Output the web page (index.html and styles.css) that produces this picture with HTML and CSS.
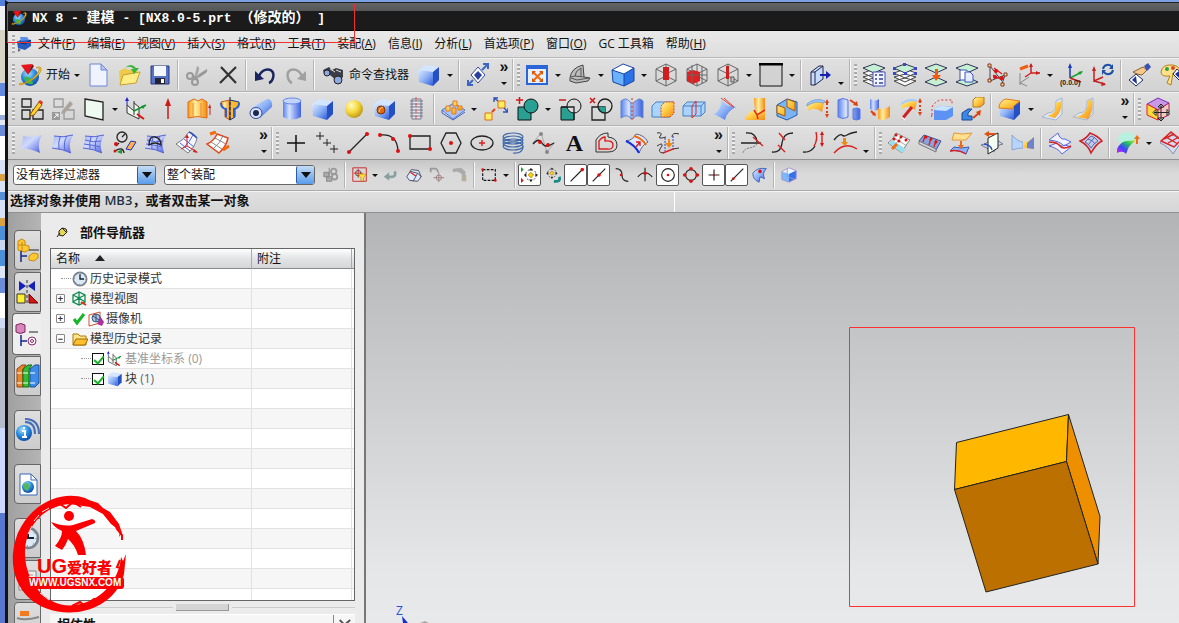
FILE: index.html
```html
<!DOCTYPE html>
<html lang="zh-CN">
<head>
<meta charset="utf-8">
<title>NX 8 - 建模</title>
<link rel="stylesheet" href="styles.css">
</head>
<body>
<svg class="defs" aria-hidden="true">
<defs>
<linearGradient id="blue" x1="0" y1="0" x2="1" y2="1"><stop offset="0" stop-color="#dce9ff"/><stop offset=".5" stop-color="#8db2f6"/><stop offset="1" stop-color="#2c58d6"/></linearGradient>
<linearGradient id="violet" x1="0" y1="0" x2="1" y2="1"><stop offset="0" stop-color="#a4b4f0"/><stop offset=".4" stop-color="#d0daff"/><stop offset="1" stop-color="#4658dc"/></linearGradient>
<linearGradient id="cyl" x1="0" x2="1" y1="0" y2="0"><stop offset="0" stop-color="#5a82ee"/><stop offset=".35" stop-color="#d5e2ff"/><stop offset="1" stop-color="#3d62e0"/></linearGradient>
<linearGradient id="gold" x1="0" y1="0" x2="1" y2="1"><stop offset="0" stop-color="#fff3a6"/><stop offset=".5" stop-color="#ffc840"/><stop offset="1" stop-color="#f08a20"/></linearGradient>
<linearGradient id="goldh" x1="0" x2="1" y1="0" y2="0"><stop offset="0" stop-color="#ff9a1e"/><stop offset=".4" stop-color="#fff0a0"/><stop offset="1" stop-color="#f58a10"/></linearGradient>
<radialGradient id="ball" cx=".35" cy=".3" r=".8"><stop offset="0" stop-color="#fffcc0"/><stop offset=".5" stop-color="#f4d63a"/><stop offset="1" stop-color="#b08a10"/></radialGradient>
<radialGradient id="globe" cx=".4" cy=".3" r=".8"><stop offset="0" stop-color="#a5e4ff"/><stop offset=".5" stop-color="#2588de"/><stop offset="1" stop-color="#0a3a9a"/></radialGradient>
<linearGradient id="rain" x1="0" y1="1" x2="1" y2="0"><stop offset="0" stop-color="#f020e0"/><stop offset=".35" stop-color="#4040ff"/><stop offset=".65" stop-color="#20c060"/><stop offset="1" stop-color="#f0f030"/></linearGradient>
<symbol id="cube" viewBox="0 0 24 24"><path d="M1 7 8 2 22 4 16 9Z" fill="#d3e5ff"/><path d="M1 7 16 9V23L2 19Z" fill="url(#blue)"/><path d="M16 9 22 4V17L16 23Z" fill="#2450c4"/></symbol>
<symbol id="nx" viewBox="0 0 24 24"><circle cx="12" cy="14" r="9" fill="url(#globe)"/><path d="M6 15q3-3 6 0t3 6q-7 1-9-6Z" fill="#3cb84a"/><path d="M2 20C7 22 20 13 21 7c1-3-2-2-3-2 7-4 7 4-1 10S-2 24 2 20Z" fill="#f6c021" stroke="#b07d08" stroke-width=".6"/><path d="M3 2 14 1 10 12Z" fill="#e8141c"/><path d="M14 1 16 3 10 12Z" fill="#8e0a10"/></symbol>
<symbol id="sheet" viewBox="0 0 24 24"><path d="M3 5q9 2 19-1Q17 12 20 22 12 18 1 17 3 11 3 5Z" fill="url(#violet)"/></symbol>
<symbol id="wire" viewBox="0 0 24 24"><path d="M12 1 22 6V18L12 23 2 18V6ZM2 6 12 11 22 6M12 11V23M12 1V13M2 18 12 13 22 18" fill="none" stroke="#666"/></symbol>
<symbol id="layers" viewBox="0 0 24 24"><path d="m12 15 11 3-11 5-11-5ZM12 11l11 3-11 5-11-5ZM12 6l11 4-11 5L1 10Z" fill="#f8f8f8" stroke="#444"/><path d="m12 1 11 4-11 5L1 5Z" fill="#c4f0d4" stroke="#335"/></symbol>
<symbol id="csys" viewBox="0 0 24 24"><path d="M9 4v14M9 14 2 8v8l12 6V10L9 6" fill="#eef5ee" stroke="#333"/><path d="M9 14 21 8" stroke="#14962e" stroke-width="1.5"/><path d="m21 8-5 1 2 3Z" fill="#14962e"/><path d="M2 2V8" stroke="#22c"/><path d="M2 0 0 4h4Z" fill="#22c"/><path d="m12 17 7 5" stroke="#d11" stroke-width="2"/></symbol>
<symbol id="snap" viewBox="0 0 20 20"><circle cx="11" cy="10" r="6" fill="none" stroke="#333" stroke-dasharray="2 2"/><path d="M11 2 13 5H9ZM11 18 13 15H9ZM3 10 6 8V12ZM19 10 16 8V12Z" fill="#222"/><path d="m11 7 3 3-3 3-3-3Z" fill="#ffcf20" stroke="#b08a00"/></symbol>
<symbol id="clock" viewBox="0 0 24 24"><circle cx="12" cy="12" r="10" fill="#dceaf6" stroke="#78828c" stroke-width="2.5"/><path d="M12 5v7h6" fill="none" stroke="#123" stroke-width="2"/><circle cx="12" cy="12" r="8" fill="none" stroke="#456" stroke-dasharray="1 5.28"/></symbol>
</defs>
</svg>

<div class="desktop">
<aside class="behind" aria-hidden="true"></aside>
<div class="window">
<header class="titlebar">
<svg class="i16"><use href="#nx"/></svg>
<h1><span>NX 8 - </span>建模<span> - [NX8.0-5.prt </span>（修改的）<span> ]</span></h1>
</header>

<nav class="menubar" aria-label="主菜单">
<svg class="i16" viewBox="0 0 16 16"><path d="M1 6 6 3 15 4V10L9 14 2 12Z" fill="#245cc0"/><path d="M4 1h7l2 3-8 1Z" fill="#5a90ea"/><path d="M1 6 9 8 15 4" fill="none" stroke="#0c2c70"/><path d="M2 12v4l3-2" fill="#667"/></svg>
<a href="#">文件(<u>F</u>)</a><a href="#">编辑(<u>E</u>)</a><a href="#">视图(<u>V</u>)</a><a href="#">插入(<u>S</u>)</a><a href="#">格式(<u>R</u>)</a><a href="#">工具(<u>T</u>)</a><a href="#">装配(<u>A</u>)</a><a href="#">信息(<u>I</u>)</a><a href="#">分析(<u>L</u>)</a><a href="#">首选项(<u>P</u>)</a><a href="#">窗口(<u>O</u>)</a><a href="#">GC 工具箱</a><a href="#">帮助(<u>H</u>)</a>
</nav>

<div class="toolbar">
<div class="group">
<button class="b label"><svg><use href="#nx"/></svg>开始<i class="tri"></i></button>
<button class="b" aria-label="新建"><svg viewBox="0 0 24 24"><path d="M4 1h11l6 6v16H4Z" fill="#eef3ff" stroke="#6f86d8"/><path d="M15 1v6h6Z" fill="#b6c6f8" stroke="#6f86d8"/></svg></button>
<button class="b" aria-label="打开"><svg viewBox="0 0 24 24"><path d="M2 8 8 5l3 2 9-2v14L3 22Z" fill="#efc94a"/><path d="M6 12 23 9l-4 11L3 22Z" fill="#ffec85" stroke="#c8a032"/><path d="M8 5q6-6 11 0h3l-5 6-3-5h3q-4-4-9-1Z" fill="#3cb43c"/></svg></button>
<button class="b" aria-label="保存"><svg viewBox="0 0 24 24"><path d="M3 3h18v18H3Z" fill="#5673c8" stroke="#27377a"/><path d="M6 3h12v10H6Z" fill="#f3f6ff"/><path d="M7 15h10v6H7Z" fill="#223"/><path d="M13 16h3v4h-3Z" fill="#fff"/></svg></button>
<span class="sep"></span>
<button class="b" aria-label="剪切"><svg viewBox="0 0 24 24"><path d="M9 15 12 3q3 1 2 4l-2 7Z" fill="#a8a8a8"/><path d="m11 15 3-4 8-5q1 2-1 4l-6 4Z" fill="#999"/><path d="m7 13 5 2-1 2" fill="none" stroke="#999" stroke-width="2"/><circle cx="5" cy="13" r="3" class="g2"/><circle cx="10" cy="19" r="3" class="g2"/></svg></button>
<button class="b" aria-label="删除"><svg viewBox="0 0 24 24"><path d="M5 4 20 20M20 4 4 20" stroke="#333" stroke-width="2.2"/></svg></button>
<span class="sep"></span>
<button class="b" aria-label="撤销"><svg viewBox="0 0 24 24"><path d="M6 13C9 4 23 4 20 15q-1 4-4 5" fill="none" stroke="#1a2560" stroke-width="2.5"/><path d="M2 8v10l9-2Z" fill="#1a2560"/></svg></button>
<button class="b" aria-label="重做"><svg viewBox="0 0 24 24"><path d="M18 13C15 4 1 4 4 15q1 4 4 5" fill="none" stroke="#a0a0a0" stroke-width="2.5"/><path d="M22 8v10l-9-2Z" fill="#a0a0a0"/></svg></button>
<span class="sep"></span>
<button class="b label tight"><svg viewBox="0 0 24 24"><path d="m2 7 6-3 3 3 4-2 7 2v7l-5 5-8-7-6-1Z" fill="#3b3d48"/><circle cx="6" cy="10" r="3" class="lens"/><circle cx="17" cy="17" r="4" class="lens"/><path d="m9 6 5 3M15 7l5 2" stroke="#ddd"/></svg>命令查找器</button>
<button class="b" aria-label="长方体"><svg><use href="#cube"/></svg></button><button class="drop" aria-label="更多体"></button>
<span class="sep"></span>
<button class="b" aria-label="自适应"><svg viewBox="0 0 24 24"><path d="m12 4 7 8-7 8-7-8Z" fill="#fff" stroke="#334ba0"/><path d="m12 8 4 4-4 5-4-5Z" fill="#2840a0"/><path d="m16 7 6-6m-5 0h5v5M7 17l-5 5m0-5v5h5" fill="none" stroke="#3b66c8" stroke-width="2"/></svg></button>
<button class="more m20" aria-label="更多按钮"><b>»</b><i class="tri"></i></button>
</div>
<div class="group">
<button class="b" aria-label="适合窗口"><svg viewBox="0 0 24 24"><path d="M1 2h22v20H1Z" fill="#2b66d8"/><path d="M3 6h18v14H3Z" fill="#e4f0ff"/><path d="m8 9 9 9M17 9l-9 9" stroke="#f06c10" stroke-width="2"/><path d="M7 8h4l-4 4ZM18 8h-4l4 4ZM7 19h4l-4-4ZM18 19h-4l4-4Z" fill="#d65708"/></svg></button><button class="drop" aria-label="适合选项"></button>
<button class="b" aria-label="渲染样式"><svg viewBox="0 0 24 24"><path d="M2 15Q3 5 15 2L16 14 22 15 20 18 8 20 2 18Z" fill="#bcbcbc" stroke="#444"/><path d="m3 14 4-1 9 1M7 13q0-5 6-8v9M3 15l6 2 12-2" fill="none" stroke="#555"/></svg></button><button class="drop" aria-label="样式选项"></button>
<button class="b" aria-label="正等测视图"><svg viewBox="0 0 24 24"><path d="M1 7 12 1l11 4-10 6Z" fill="#fff"/><path d="M1 7 13 11V23L2 19Z" fill="#6ab2ff"/><path d="M13 11 23 5v13l-10 5Z" fill="#2b72e6"/><path d="M1 7 12 1l11 4v13l-10 5L2 19ZM1 7l12 4 10-6M13 11v12" fill="none" stroke="#1546a8"/></svg></button><button class="drop" aria-label="视图选项"></button>
<button class="b" aria-label="剖切"><svg><use href="#wire"/><path d="M9 4h6v13H9Z" fill="#d01c1c"/></svg></button>
<button class="b" aria-label="编辑剖切"><svg><use href="#wire"/><path d="M2 9l6-2 7 2v9l-7 3-6-3Z" fill="#e02020"/><path d="M7 2V20M17 3V21M2 12H22" stroke="#666"/></svg></button>
<button class="b" aria-label="对象显示"><svg><use href="#wire"/><path d="M10 3h3v13h-3Z" fill="#d01c1c"/><path d="M15 14h3v5h-3Z" fill="#ccc" stroke="#555"/></svg></button><button class="drop" aria-label="显示选项"></button>
<button class="b" aria-label="背景"><svg viewBox="0 0 24 24"><path d="M1 1h22v22H1Z" fill="#d2d2d2" stroke="#111"/><path d="M0 1h24" stroke="#000" stroke-width="3"/></svg></button><button class="drop" aria-label="背景选项"></button>
<span class="sep"></span>
<button class="b" aria-label="移动面"><svg viewBox="0 0 24 24"><path d="m3 9 8-6h4v13l-8 6H3Z" fill="#c6dcff" stroke="#224"/><path d="M7 9v13M7 9l8-6M3 9h4" fill="none" stroke="#224"/><path d="M12 12h7" stroke="#1522b0" stroke-width="2"/><path d="m18 8 5 4-5 4Z" fill="#1522b0"/></svg></button>
<button class="more m14" aria-label="更多按钮"><b></b><i class="tri"></i></button>
</div>
<div class="group">
<button class="b" aria-label="图层设置"><svg><use href="#layers"/><path d="M11 9h12v14H11Z" fill="#f2f4ff" stroke="#4450c0"/><path d="M13 12h2m2 0h4M13 16h2m2 0h4M13 20h2m2 0h4" stroke="#3340a0" stroke-width="1.5"/></svg></button>
<button class="b" aria-label="图层视图"><svg><use href="#layers"/><path d="M0 4h3v3H0ZM21 4h3v3h-3ZM0 9h3v3H0ZM21 9h3v3h-3ZM10 0h3v3h-3ZM11 9h3v3h-3Z" fill="#3848c8"/></svg></button>
<button class="b" aria-label="移动至图层"><svg viewBox="0 0 24 24"><path d="m12 1 11 4-11 5L1 5ZM12 14l11 5-11 4-11-4Z" fill="#c4f0d4" stroke="#335"/><path d="M11 6h3v6h3l-5 6-4-6h3Z" fill="#f05a10"/></svg></button>
<button class="b" aria-label="复制至图层"><svg viewBox="0 0 24 24"><path d="m12 1 11 4-11 5L1 5ZM12 14l11 5-11 4-11-4Z" fill="#c4f0d4" stroke="#335"/><path d="M5 7h6l3 2v8H5Z" fill="#fff" stroke="#3c54b8"/><path d="M10 9h5l3 3v7h-8Z" fill="#e6ecff" stroke="#3c54b8"/></svg></button>
<button class="b" aria-label="基准点"><svg viewBox="0 0 24 24"><path d="M4 3v15l15-6-3 9M4 3l12 15" fill="none" stroke="#444"/><path d="m7 12 9 5M8 5l8 6" class="rl"/><circle cx="10" cy="8" r="2" class="rd"/><circle cx="9" cy="14" r="2" class="rd"/><circle cx="16" cy="15" r="2" class="rd"/><path d="M2 1h3v3H2ZM2 16h3v3H2ZM18 10h3v3h-3ZM15 20h3v3h-3Z" fill="#ffe070" stroke="#803030"/></svg></button>
<button class="b" aria-label="定向坐标系"><svg viewBox="0 0 24 24"><path d="M3 10v12M3 20l9-6M3 20l7 3" fill="none" stroke="#888"/><path d="M14 1v9h9M14 10l-6 4" fill="none" stroke="#d02020" stroke-width="1.5"/><path d="M3 6 11 3" stroke="#ee5d10" stroke-width="3"/><path d="m23 10-4-2v4ZM14 0l-2 4h4Z" fill="#d02020"/></svg></button><button class="drop" aria-label="坐标系选项"></button>
<button class="b" aria-label="坐标原点"><svg viewBox="0 0 24 24"><path d="M10 3v12" stroke="#1838c0" stroke-width="1.5"/><path d="m10 0-2 5h4Z" fill="#1838c0"/><path d="m10 15 12-6" stroke="#18a030" stroke-width="1.5"/><path d="m23 8-5 1 2 3Z" fill="#18a030"/><path d="m10 15 11 4" stroke="#c01818" stroke-width="1.5"/><text x="0" y="22" class="tiny">(0.0.0)</text></svg></button>
<button class="b" aria-label="旋转坐标系"><svg viewBox="0 0 24 24"><path d="M3 5v13l9-4M3 18l11 3" fill="none" stroke="#c82020" stroke-width="1.5"/><path d="M3 3 1 8h4ZM15 22l-4-3-1 4Z" fill="#c82020"/><path d="M12 6a5 5 0 0 1 9-2M22 7a5 5 0 0 1-9 2" fill="none" stroke="#1b4ea8" stroke-width="2"/><path d="M22 1v5h-4ZM11 12V7h4Z" fill="#1b4ea8"/></svg></button>
<span class="sep"></span>
<button class="b" aria-label="隐藏"><svg viewBox="0 0 24 24"><path d="m5 9 10-5 4 3-5 5-5-1Z" fill="#f6c88a" stroke="#8a6030"/><path d="m16 3 4-3 3 4-4 4Z" fill="#3c50b0"/><path d="m8 11 7 6-7 6-7-6Z" fill="#fff" stroke="#1a2860"/><path d="m8 13 1 8-5-4Z" fill="#1c349a"/></svg></button>
<button class="b" aria-label="编辑显示"><svg viewBox="0 0 24 24"><path d="M2 9Q3 1 14 2q9 2 7 9l-7-1-2 12-4-2 3-7q-9 1-9-4Z" fill="#ffe08c" stroke="#b48210"/><circle cx="8" cy="6" r="2" fill="#30a040"/><circle cx="14" cy="5" r="2" fill="#e04030"/><path d="m18 6 7 6-5 5-6-6Z" fill="#fff" stroke="#1a2860"/><path d="m20 8v7l-4-4Z" fill="#1c349a"/></svg></button>
</div>
</div>

<div class="toolbar">
<div class="group">
<button class="b" aria-label="草图"><svg viewBox="0 0 24 24"><path d="M2 2h9v8H2ZM2 13h8v9H2ZM13 13h10v9H13Z" class="k"/><path d="m11 16 8-11 3 3-8 10-4 1Z" fill="#ffd030" stroke="#865300"/><path d="m18 5 2-2 3 2-1 3Z" fill="#d84020"/></svg></button>
<button class="b" aria-label="任务环境草图"><svg viewBox="0 0 24 24"><path d="M3 2h9v8H3ZM13 13h10v9H13Z" fill="none" stroke="#999" stroke-width="1.3"/><path d="m11 14 8-10 3 3-8 9-4 1Z" fill="#aaa49a"/><path d="M1 15h8v8H1Z" fill="#999"/><path d="m3 21 4-4m0 3v-3H4" stroke="#fff" fill="none"/></svg></button>
<button class="b" aria-label="基准平面"><svg viewBox="0 0 24 24"><path d="m3 2 18 3v18L3 19Z" fill="#eefaf0" stroke="#222" stroke-width="1.3"/></svg></button><button class="drop" aria-label="基准选项"></button>
<button class="b" aria-label="基准坐标系"><svg><use href="#csys"/></svg></button>
<button class="b" aria-label="矢量"><svg viewBox="0 0 24 24"><path d="M12 22V5" stroke="#d01818" stroke-width="1.5"/><path d="m12 1-3 8h6Z" fill="#d01818"/></svg></button>
<button class="b" aria-label="拉伸"><svg viewBox="0 0 24 24"><path d="M1 5 7 2l4 2 4-2 5 3v16q-9-3-19 0Z" fill="url(#goldh)" stroke="#e06a10"/><path d="M6 6v14M14 6v14" stroke="#e89030"/><path d="M23 18v-8" stroke="#d02020"/><path d="m23 7-2 4h3Z" fill="#d02020"/></svg></button>
<button class="b" aria-label="回转"><svg viewBox="0 0 24 24"><path d="M3 5 12 3v20l-5-3v-8q-4-1-4-7Z" fill="url(#goldh)" stroke="#c05a10"/><path d="m12 3 9 2q0 6-4 7v8l-5 3Z" fill="#ffb830" stroke="#123884"/><path d="M3 6q0 5 5 6v8M21 6q0 5-5 6v8" fill="none" stroke="#2c60d0" stroke-width="2"/><path d="M12 0v24" stroke="#222" stroke-dasharray="3 2"/></svg></button>
<button class="b" aria-label="管道"><svg viewBox="0 0 24 24"><path d="m2 11 16-9q6 0 5 8L11 21Z" fill="url(#blue)"/><ellipse cx="7" cy="16" rx="6" ry="5.500" fill="#dbe4ff" stroke="#354a90"/><ellipse cx="7" cy="16" rx="3" ry="3" fill="#1c2850"/></svg></button>
<button class="b" aria-label="圆柱"><svg viewBox="0 0 24 24"><path d="M3 4v16q9 5 18 0V4Z" fill="url(#cyl)"/><ellipse cx="12" cy="4" rx="9" ry="3" fill="#c2d5ff" stroke="#6688e8"/></svg></button>
<button class="b" aria-label="块"><svg><use href="#cube"/></svg></button>
<button class="b" aria-label="球"><svg viewBox="0 0 24 24"><circle cx="12" cy="12" r="9" fill="url(#ball)"/></svg></button>
<button class="b" aria-label="孔"><svg><use href="#cube"/><circle cx="8" cy="13" r="4" fill="#e06a10" stroke="#803000"/><path d="M6 15q0-4 4-5" stroke="#ffd080" fill="none"/></svg></button>
<button class="b" aria-label="螺纹"><svg viewBox="0 0 24 24"><path d="M8 2h9v20H8Z" fill="#e4e8f0" stroke="#778"/><path d="M6 4h13M6 7h13M6 10h13M6 13h13M6 16h13M6 19h13" stroke="#778"/><path d="M12 0v24" stroke="#e05050" stroke-dasharray="4 2"/></svg></button>
<span class="sep"></span>
<button class="b" aria-label="阵列特征"><svg viewBox="0 0 24 24"><path d="M1 13 13 6l11 7-12 9Z" fill="#a8c4ff" stroke="#5878c8"/><path d="M1 13v3l11 7 12-8" fill="none" stroke="#3c60c0"/><path d="M5 9h4v5H5ZM12 4h4v5h-4ZM17 9h4v4h-4ZM11 11h4v6h-4Z" fill="url(#gold)" stroke="#e07a18"/></svg></button><button class="drop" aria-label="阵列选项"></button>
<button class="b" aria-label="镜像"><svg viewBox="0 0 24 24"><path d="M1 16h7v7H1ZM14 4h7v7h-7Z" fill="#fff060" stroke="#e06a10"/><path d="m8 15 3-3" stroke="#e04010" stroke-width="2"/><path d="M14 1h-4v4M10 1l4 3M19 15h5v-4M24 15l-4-4" class="bl"/></svg></button>
<button class="b" aria-label="求和"><svg viewBox="0 0 24 24"><path d="M3 10h13v13H3Z" fill="#28a094" stroke="#111"/><circle cx="16" cy="9" r="7" fill="#28a094" stroke="#111"/><path d="M1 3h7M4.500 0v7" stroke="#d01818" stroke-width="1.5"/></svg></button><button class="drop" aria-label="布尔选项"></button>
<button class="b" aria-label="求差"><svg viewBox="0 0 24 24"><path d="M3 10h13v13H3Z" fill="#28a094" stroke="#111"/><circle cx="16" cy="9" r="7" fill="#dadada" stroke="#111"/><path d="M3 10h13v13" class="k"/><path d="M1 3h7" stroke="#d01818" stroke-width="1.500"/></svg></button>
<button class="b" aria-label="求交"><svg viewBox="0 0 24 24"><path d="M3 10h13v13H3Z" class="k"/><path d="M9 10h7v6q-7 0-7-6Z" fill="#28a094"/><circle cx="16" cy="9" r="7" class="k"/><path d="m1 1 5 5M6 1 1 6" stroke="#d01818" stroke-width="1.500"/></svg></button>
<button class="b" aria-label="缝合"><svg viewBox="0 0 24 24"><path d="M1 4q5-4 8 0 2 1 2 3v15q-3-6-10-1ZM13 7q1-3 3-3 3-4 7 0v17q-7-5-10 1Z" fill="url(#cyl)" stroke="#5c84d0"/><path d="M12 1v22" stroke="#e03030" stroke-dasharray="2 2"/></svg></button>
<button class="b" aria-label="修剪体"><svg viewBox="0 0 24 24"><path d="m1 9 4-4h18l-4 4v11H1Z" fill="#a8d4ff" stroke="#4880c0"/><path d="m10 9 4-4h9v11l-4 4h-9Z" fill="url(#gold)" stroke="#e04820" stroke-dasharray="2 1"/></svg></button>
<button class="b" aria-label="拆分体"><svg viewBox="0 0 24 24"><path d="m1 9 4-4h18v10l-4 4H1Z" fill="#a8d4ff" stroke="#4880c0"/><path d="M1 9h18l4-4M19 9v10" fill="none" stroke="#4880c0"/><path d="m10 9 4-5v13l-4 4Z" fill="none" stroke="#d03030"/></svg></button>
<button class="b" aria-label="修剪片体"><svg viewBox="0 0 24 24"><path d="M8 2q4 7 15 8-9 4-11 13L1 17q8-4 7-15Z" fill="url(#blue)"/><path d="m8 1 12 9M11 1l10 9" fill="none" stroke="#e04040"/></svg></button>
<button class="b" aria-label="延伸片体"><svg viewBox="0 0 24 24"><path d="M10 1h11v19q-6 4-8-1Q10 11 10 1Z" fill="url(#goldh)"/><path d="m10 13 3 5 8-5v10H1q2-8 9-10Z" fill="url(#gold)"/><path d="m10 13 3 5 8-5M13 18l1 4" fill="none" stroke="#e03010" stroke-width="1.500"/></svg></button>
<button class="b" aria-label="补片"><svg viewBox="0 0 24 24"><path d="m2 8 10-6 10 3v13l-10 5-10-4Z" fill="#7ab4f4" stroke="#2858a8"/><path d="m2 8 8 3v8l-8-3ZM12 2v8l8 4V5Z" fill="url(#gold)" stroke="#a05808"/></svg></button>
<button class="b" aria-label="加厚"><svg viewBox="0 0 24 24"><path d="M1 9Q9 3 18 6l-2 9Q8 9 3 14Z" fill="url(#gold)"/><path d="M1 9Q9 3 18 6l1-2Q9 0 1 7Z" fill="#a0ccff" stroke="#4070b0" stroke-width=".5"/><path d="M21 6v12" stroke="#e04010" stroke-dasharray="2 2" stroke-width="2"/><path d="m21 2-2 4h4ZM21 21l-2-4h4Z" fill="#e04010"/></svg></button>
<button class="b" aria-label="移动体"><svg viewBox="0 0 24 24"><path d="M1 3q5-3 10 0v17q-5 3-10 0ZM16 12q4-2 7 0v10q-4 2-7 0Z" fill="url(#cyl)" stroke="#5878e8"/><path d="m13 3 6 4" stroke="#e04010" stroke-width="2"/><path d="m21 9-5-1 4-4Z" fill="#e04010"/></svg></button>
<button class="b" aria-label="替换面"><svg viewBox="0 0 24 24"><path d="M2 2q5 3 9 0v10q-4 3-9 0Z" fill="url(#cyl)"/><path d="M10 11q6 3 12-2v11q-6 5-12 2Z" fill="url(#goldh)"/><path d="m3 14 3 3" stroke="#e04010" stroke-width="2"/><path d="m8 19-4-1 3-3Z" fill="#e04010"/></svg></button>
<button class="b" aria-label="偏置面"><svg viewBox="0 0 24 24"><path d="M2 8Q11 2 18 5l-2 8Q8 7 3 12Z" fill="url(#gold)"/><path d="M2 8Q11 2 18 5V3Q10 0 2 6Z" fill="#a0ccff"/><path d="M3 22 13 10" stroke="#d02020" stroke-width="3"/><path d="m2 20 4 3" stroke="#eee" stroke-width="2"/><path d="M21 4v12" stroke="#e04010" stroke-dasharray="2 2" stroke-width="2"/><path d="m21 1-2 4h4ZM21 19l-2-4h4Z" fill="#e04010"/></svg></button>
<button class="b" aria-label="抽取"><svg viewBox="0 0 24 24"><path d="M4 13q4-5 9-4l10 1v9l-7 4H4Z" fill="#5c92f4"/><path d="M4 13q4-5 9-4l10 1-7 4Z" fill="#c8e4ff"/><path d="M2 18V10q4-7 10-7h10v5M2 18l-1 3" fill="none" stroke="#e03030" stroke-dasharray="2 2"/></svg></button>
<button class="b" aria-label="复制体"><svg viewBox="0 0 24 24"><path d="m1 16 6-4h4l-4 4v3h4v4H1Z" fill="#3c88e8" stroke="#184890"/><path d="m12 3 3-3h8v7l-4 3h-7Z" fill="url(#gold)" stroke="#b87818"/><path d="m12 21 6-5" stroke="#e04010" stroke-width="2"/><path d="m20 13-1 6-4-4Z" fill="#e04010"/></svg></button>
<span class="sep"></span>
<button class="b" aria-label="边倒圆"><svg><use href="#cube"/><path d="M1 9q2-6 7-7l14 2-5 4q-2 1-2 4L1 11Z" fill="url(#gold)" stroke="#e07a18"/></svg></button><button class="drop" aria-label="倒圆选项"></button>
<button class="b" aria-label="面倒圆"><svg viewBox="0 0 24 24"><path d="m15 4 6-3v16l-6 6L1 20l6-4q9 0 8-12Z" fill="#dce8fa" stroke="#a4b4d0"/><path d="m15 6 5-2q2 10-6 17L6 19q10-2 9-13Z" fill="url(#gold)"/></svg></button>
<button class="b" aria-label="软倒圆"><svg viewBox="0 0 24 24"><path d="m15 4 6-3v16l-6 6L1 20l6-4q9 0 8-12Z" fill="#dce8fa" stroke="#a4b4d0"/><path d="m16 4 4-2q2 12-4 20L3 20q13-2 13-16Z" fill="url(#gold)"/></svg></button>
<button class="more m36" aria-label="更多按钮"><b>»</b><i class="tri"></i></button>
</div>
<div class="group">
<button class="b" aria-label="移动面"><svg viewBox="0 0 24 24"><path d="m1 7 11-6 11 5-11 7Z" fill="#c898e8" stroke="#7830b0"/><path d="m1 7 11 6v10L1 18Z" fill="#ffd83a" stroke="#e02020"/><path d="m12 13 11-7v12l-11 5Z" fill="#f4c8c0" stroke="#b02060"/><path d="M15 8v15M8 15.500h15M15 7l-3 3h6ZM15 24l-3-3h6ZM7 15.500l3-3v6ZM24 15.500l-3-3v6Z" fill="#fff" stroke="#222"/></svg></button>
<button class="b" aria-label="拉出面"><svg viewBox="0 0 24 24"><path d="M4 4h18v17H4Z" fill="#ffd83a" stroke="#e02020"/></svg></button>
</div>
</div>

<div class="toolbar last">
<div class="group">
<button class="b" aria-label="四点曲面"><svg><use href="#sheet"/></svg></button>
<button class="b" aria-label="直纹"><svg><use href="#sheet"/><path d="M3 5q9 2 19-1M1 17q11 1 19 5M9 6q-2 6-1 12M16 5q-4 6-2 15" class="net"/></svg></button>
<button class="b" aria-label="网格曲面"><svg><use href="#sheet"/><path d="M3 5q9 2 19-1M1 17q11 1 19 5M3 9q9 3 16 1M2 13q9 1 16 3M9 6q-2 6-1 12M16 5q-4 6-2 15" class="net"/></svg></button>
<button class="b" aria-label="艺术曲面"><svg viewBox="0 0 24 24"><circle cx="9" cy="6" r="5" class="k"/><path d="m9 6 3-3M3 15l3-3M2 20q8-5 9 2" class="k"/><circle cx="3" cy="13" r="2" class="rd"/><circle cx="2" cy="20" r="1.500" class="rd"/><path d="m4 21 5-3v5Z" fill="#1b9c2b"/><path d="m13 18 5-8 5 1-5 8Z" fill="#ffb050" stroke="#2030b0"/></svg></button>
<button class="b" aria-label="N 边曲面"><svg><use href="#sheet"/><path d="M3 5q9 2 19-1M1 17q11 1 19 5M3 9q9 3 16 1M2 13q9 1 16 3M9 6q-2 6-1 12M16 5q-4 6-2 15" class="net"/><path d="M5 14q0-9 6-8t6 8q-6-4-12 0Z" class="k"/></svg></button>
<button class="b" aria-label="扫掠"><svg viewBox="0 0 24 24"><path d="M1 13Q8 10 14 1l8 6q-2 9-9 15Z" fill="#f4f7ff" stroke="#555" stroke-width=".7"/><path d="m5 12 10 8M9 8l10 8M8 17Q15 11 18 4" class="net"/><path d="M14 1q3 1 8 6" class="bl"/><path d="M12 15V6M12 15l-6 3M12 15l10 6" fill="none" stroke="#d42020"/><path d="m12 3-2 4h4ZM23 22l-4-4-1 3Z" fill="#d02020"/></svg></button>
<button class="b" aria-label="规律延伸"><svg viewBox="0 0 24 24"><path d="M1 13Q8 10 11 3l11 4q-2 9-9 15Z" fill="#fff" stroke="#e04820" stroke-width="1.500"/><path d="m5 11 11 7M9 7l11 6M8 17Q14 12 17 5" stroke="#888" fill="none"/><path d="m4 3 6-2M17 19l6-4" stroke="#f06b10" stroke-width="3"/></svg></button>
<button class="more m40" aria-label="更多按钮"><b>»</b><i class="tri"></i></button>
</div>
<div class="group">
<button class="b" aria-label="点"><svg viewBox="0 0 24 24"><path d="M12 4v17M3 12h18" stroke="#111" stroke-width="1.500"/></svg></button>
<button class="b" aria-label="点集"><svg viewBox="0 0 24 24"><path d="M5 1v8M1 5h8M12 8v7M8 12h8M19 14v8M15 18h8" stroke="#222"/></svg></button>
<button class="b" aria-label="直线"><svg viewBox="0 0 24 24"><path d="M3 21 21 3" class="k"/><circle cx="3" cy="21" r="2" class="rd"/><circle cx="21" cy="3" r="2" class="rd"/></svg></button>
<button class="b" aria-label="圆弧"><svg viewBox="0 0 24 24"><path d="M3 4Q20 2 21 20" class="k"/><circle cx="3" cy="4" r="2" class="rd"/><circle cx="16" cy="8" r="2" class="rd"/><circle cx="21" cy="20" r="2" class="rd"/></svg></button>
<button class="b" aria-label="矩形"><svg viewBox="0 0 24 24"><path d="M2 5h20v13H2Z" class="k"/><circle cx="2" cy="5" r="2" class="rd"/><circle cx="22" cy="18" r="2" class="rd"/></svg></button>
<button class="b" aria-label="多边形"><svg viewBox="0 0 24 24"><path d="M7 2h10l5 10-5 10H7L2 12Z" class="k"/><circle cx="12" cy="12" r="2" class="rd"/></svg></button>
<button class="b" aria-label="椭圆"><svg viewBox="0 0 24 24"><ellipse cx="12" cy="12" rx="11" ry="7" class="k"/><path d="M9 12h6M12 9v6" class="rl"/></svg></button>
<button class="b" aria-label="螺旋线"><svg viewBox="0 0 24 24"><g class="coil"><ellipse cx="12" cy="6" rx="10" ry="4"/><ellipse cx="12" cy="9" rx="10" ry="4"/><ellipse cx="12" cy="12" rx="10" ry="4"/><ellipse cx="12" cy="15" rx="10" ry="4"/><path d="M22 15q0 8-10 7"/></g></svg></button>
<button class="b" aria-label="样条"><svg viewBox="0 0 24 24"><path d="m1 12 8-10 6 19 8-10" fill="none" stroke="#aaa"/><path d="M1 13q6-7 9-1t12 0" class="k"/><circle cx="9" cy="3" r="2" fill="#888"/><circle cx="15" cy="21" r="2" fill="#888"/><circle cx="8" cy="11" r="2" class="rd"/><circle cx="16" cy="14" r="2" class="rd"/></svg></button>
<button class="b" aria-label="文本"><span class="letter">A</span></button>
<button class="b" aria-label="偏置曲线"><svg viewBox="0 0 24 24"><path d="M2 21V9q4-7 12-7v4q9 1 9 8t-9 7Z" fill="none" stroke="#333"/><path d="M5 18v-8q3-4 6-4v4q8-1 8 4t-6 4Z" class="rl"/></svg></button>
<button class="b" aria-label="在面上偏置"><svg viewBox="0 0 24 24"><path d="M1 10Q8 9 11 3q8 1 12 8-6 3-9 11-4-8-13-12Z" fill="#dce8ff" stroke="#667"/><path d="M1 10q9 4 13 12" fill="none" stroke="#1530e0" stroke-width="2"/><path d="M9 5q8 2 12 9" fill="none" stroke="#ee6a10" stroke-width="2"/><path d="m11 16 4-5m0 4v-4h-4" class="rl"/></svg></button>
<button class="b" aria-label="桥接曲线"><svg viewBox="0 0 24 24"><path d="M1 2q5-1 4 2-5 5 5 2M23 3q-7-2-7 3M1 15q6-4 5 0-6 7 2 7M17 18l6-1" fill="none" stroke="#333"/><path d="M9 7v13M17 5v14" stroke="#3040d0" stroke-dasharray="2 1"/><path d="M12 8h2v4h3l-4 5-4-5h3Z" fill="#ee8a10"/><path d="m7 22 10-4" class="rl"/></svg></button>
<button class="more m44" aria-label="更多按钮"><b>»</b><i class="tri"></i></button>
</div>
<div class="group">
<button class="b" aria-label="修剪曲线"><svg viewBox="0 0 24 24"><path d="M1 12h20M6 2q10-1 11 9" class="k"/><path d="M17 13q-2 3-8 4-5 1-6 5" fill="none" stroke="#777" stroke-dasharray="2 1"/><path d="m13 6 10 9" class="rl"/></svg></button>
<button class="b" aria-label="分割曲线"><svg viewBox="0 0 24 24"><path d="M1 21q9 1 10-9T22 2" class="k"/><path d="m8 2 6 7M7 14l7 7" class="rl"/></svg></button>
<button class="b" aria-label="曲线长度"><svg viewBox="0 0 24 24"><path d="M1 21q8 1 12-6" class="k"/><path d="M12 15q4-6 2-14M20 3v11" class="rl"/><path d="m20 0-2 4h4ZM20 16l-2-4h4Z" class="rd"/></svg></button>
<button class="b" aria-label="光顺曲线"><svg viewBox="0 0 24 24"><path d="M1 9q6-7 8-5t5 0 10-3" class="k"/><path d="M1 22q11-12 23-4" class="rl"/><path d="M10 7h3v4h2l-3 4-4-4h2Z" fill="#ee8a10"/></svg></button>
<button class="more m14" aria-label="更多按钮"><b></b><i class="tri"></i></button>
</div>
<div class="group">
<button class="b" aria-label="X 成形"><svg viewBox="0 0 24 24"><path d="M1 12Q7 8 9 2l14 7q-5 5-8 13Z" fill="#fafafa" stroke="#888"/><path d="m2 12 3-3 14 9-4 4Z" fill="#9adff0"/><path d="m7 7 13 8M15 5l-8 10" fill="none" stroke="#aaa"/><g class="rd"><circle cx="9" cy="4" r="1.500"/><circle cx="14" cy="6" r="1.500"/><circle cx="19" cy="9" r="1.500"/><circle cx="7" cy="8" r="1.500"/><circle cx="12" cy="10" r="1.500"/></g><path d="m5 18 5-5" stroke="#f07010" stroke-width="3"/></svg></button>
<button class="b" aria-label="I 成形"><svg viewBox="0 0 24 24"><path d="m1 10 5-6 17 6-5 9Z" fill="#88a4e0" stroke="#405090"/><path d="m1 10 17 8v3L1 13Z" fill="#d0d0dc" stroke="#777"/><path d="m7 5-2 6M13 7l-2 7M18 9l-2 7" class="rl"/><g class="rd"><circle cx="8" cy="6" r="1.500"/><circle cx="13" cy="8" r="1.500"/><circle cx="18" cy="11" r="1.500"/></g></svg></button>
<button class="b" aria-label="曲面变形"><svg viewBox="0 0 24 24"><path d="M5 2q8 2 18 0l-6 7H3Z" fill="#ffe090" stroke="#e09a30"/><path d="M1 20 5 16q7 2 15 0l-3 7q-7-5-16-3Z" fill="#8cb0f8" stroke="#3858b8"/><path d="M12 10v5" fill="none" stroke="#ee6810" stroke-width="2"/><path d="m12 18-3-4h6Z" fill="#ee6810"/><path d="M1 20q8-2 16 3" class="rl"/></svg></button>
<button class="b" aria-label="匹配边"><svg viewBox="0 0 24 24"><path d="M1 14q7-1 11-8l11 7q-7 1-9 8Z" fill="#c8d8fa" stroke="#778"/><path d="M8 7 18 2v15L8 23Z" fill="#f4fff4" stroke="#222"/><path d="M4 13q7 1 8 6" class="bl"/><path d="M8 3h8" stroke="#e05010" stroke-width="2"/><path d="m4 3 5-3v6Z" fill="#e05010"/></svg></button>
<button class="b" aria-label="剪断曲面"><svg viewBox="0 0 24 24"><path d="M1 4q6 7 11 7v6q-6 0-11 2Z" fill="#b8d4f8" stroke="#88a4d8"/><path d="M12 11q6 0 11-5v12q-5-1-11-1Z" fill="url(#gold)"/><path d="m16 12 7-6v12l-7-1Z" fill="#6c84cc"/></svg></button>
<span class="sep"></span>
<button class="b" aria-label="全局变形"><svg viewBox="0 0 24 24"><path d="m1 9 9-7q2 7 7 6l6 3-7 4q-4-5-15-6ZM1 15l8-3q4 5 8 2l6 2-9 7q-4-6-13-8Z" fill="#f0f2ff" stroke="#5a68e0"/><path d="M1 11q8 0 11 4t11 0" class="rl"/></svg></button>
<button class="b" aria-label="扩大"><svg viewBox="0 0 24 24"><path d="M1 10Q7 8 11 2q8 3 12 8-6 3-11 12-3-8-11-12Z" fill="#c4cce8" stroke="#d02020" stroke-width="1.500"/><path d="m6 11 6-6q4 1 7 5-5 3-7 7-2-4-6-6ZM9 8q5 1 7 5M15 7l-6 7" fill="none" stroke="#5a68b0"/></svg></button>
<span class="sep"></span>
<button class="b" aria-label="面分析"><svg viewBox="0 0 24 24"><path d="M1 10Q4 0 13 1q6 1 7 8-8 0-10 8Q8 11 1 10Z" fill="#b8f0e0"/><path d="M1 18q4-8 10-8l10-1q-7 4-9 9l-2 5q-3-4-9-1Z" fill="url(#rain)"/><path d="M21 13V7" stroke="#ee7010" stroke-width="2"/><path d="m21 4-3 4h6Z" fill="#ee7010"/></svg></button><button class="drop" aria-label="分析选项"></button>
<button class="b" aria-label="截面分析"><svg viewBox="0 0 24 24"><path d="m1 12 10-10 12 8-9 13Q9 15 1 12Z" fill="#d4daf0" stroke="#8090b0"/><path d="m2 10 10-9 10 8-7 7ZM7 6l12 7M5 8l10-5M9 12l11-6" class="rl"/></svg></button>
</div>
</div>

<div class="selbar">
<label class="pick"><select aria-label="类型过滤器"><option>没有选择过滤器</option></select></label>
<label class="pick wide"><select aria-label="选择范围"><option>整个装配</option></select></label>
<button class="s" aria-label="选择组件"><svg viewBox="0 0 20 20"><path d="M2 7h6v5H2ZM5 12h6v5H5ZM8 2v9" fill="#aaa" stroke="#888"/><circle cx="13" cy="6" r="3" class="g2"/><circle cx="14" cy="12" r="3" class="g2"/></svg></button>
<span class="sep"></span>
<button class="s" aria-label="过滤"><svg viewBox="0 0 20 20"><path d="M2 2h15v15H2Z" fill="none" stroke="#d02020"/><circle cx="8" cy="8" r="3" fill="none" stroke="#444"/><path d="M8 3v10M3 8h10" stroke="#d02020"/><path d="M8 9h9l-3 4v4l-3-1v-3Z" fill="#ffe040" stroke="#a07808" stroke-width=".6"/></svg></button><button class="drop slim" aria-label="过滤选项"></button>
<button class="s" aria-label="返回"><svg viewBox="0 0 20 20"><path d="M14 6q3 7-7 6" fill="none" stroke="#89a09f" stroke-width="3"/><path d="M8 7v9l-6-4Z" fill="#89a09f"/></svg></button>
<button class="s" aria-label="面选择"><svg viewBox="0 0 20 20"><path d="m2 12 5-8 8 1 3 7-4 5-9-1Z" fill="#e0eaff" stroke="#445"/><path d="m6 6 8 2 4 4M14 8l-5 9" fill="none" stroke="#445"/><path d="m6 7 6 4" class="rl"/></svg></button>
<button class="s" aria-label="旋转中心"><svg viewBox="0 0 20 20"><path d="M3 7V3h6q2 1 2 4" fill="none" stroke="#999" stroke-width="2"/><circle cx="12" cy="13" r="3" fill="none" stroke="#888"/><path d="M12 7v11M6 13h12" stroke="#a77"/></svg></button>
<button class="s" aria-label="锤子"><svg viewBox="0 0 20 20"><path d="m2 3 9-1 5 4v10h-4V9L7 6 2 7Z" fill="#aaa"/><path d="M12 10h5v7h-5Z" fill="#b4b09c"/></svg></button>
<span class="sep"></span>
<button class="s" aria-label="矩形选择"><svg viewBox="0 0 20 20"><path d="M3 4h14v12H3Z" fill="none" stroke="#111" stroke-width="1.300" stroke-dasharray="3 1.500"/><circle cx="3" cy="4" r="1.500" class="rd"/><circle cx="17" cy="16" r="1.500" class="rd"/></svg></button><button class="drop" aria-label="选择方式"></button>
<span class="sep"></span>
<button class="s on" aria-label="启用捕捉点"><svg viewBox="0 0 20 20"><use href="#snap" width="20" height="20"/><path d="m0 1 3 3-3 3Z" fill="#1a9c2b"/><path d="m0 13 3 3-3 3Z" class="rd"/></svg></button>
<button class="s" aria-label="重置捕捉"><svg viewBox="0 0 20 20"><use href="#snap" width="16" height="16"/><path d="M17 12q2 6-6 5" fill="none" stroke="#168a86" stroke-width="3"/></svg></button>
<button class="s on" aria-label="端点"><svg viewBox="0 0 20 20"><path d="M4 17 16 5" class="k"/><circle cx="17" cy="4" r="2" class="rd"/></svg></button>
<button class="s on" aria-label="中点"><svg viewBox="0 0 20 20"><path d="M3 17 17 3" class="k"/><circle cx="10" cy="10" r="2" class="rd"/></svg></button>
<button class="s" aria-label="控制点"><svg viewBox="0 0 20 20"><path d="M3 3q7 0 7 7t7 7" class="k"/><circle cx="9" cy="10" r="1.500" class="rd"/></svg></button>
<button class="s" aria-label="交点"><svg viewBox="0 0 20 20"><path d="M10 2v15M2 12q8-9 16 0" class="k"/><circle cx="10" cy="8" r="2" class="rd"/></svg></button>
<button class="s on" aria-label="圆心"><svg viewBox="0 0 20 20"><circle cx="10" cy="10" r="7" class="k"/><circle cx="10" cy="10" r="1.500" class="rd"/></svg></button>
<button class="s" aria-label="象限点"><svg viewBox="0 0 20 20"><circle cx="10" cy="10" r="6" class="k"/><g class="rd"><circle cx="10" cy="3" r="2"/><circle cx="10" cy="17" r="2"/><circle cx="3" cy="10" r="2"/><circle cx="17" cy="10" r="2"/></g></svg></button>
<button class="s on" aria-label="存在点"><svg viewBox="0 0 20 20"><path d="M10 4v12M4 10h12" class="k"/><circle cx="10" cy="10" r="1" class="rd"/></svg></button>
<button class="s on" aria-label="曲线上的点"><svg viewBox="0 0 20 20"><path d="M3 17 17 3" class="k"/><circle cx="6" cy="14" r="1.500" class="rd"/></svg></button>
<button class="s" aria-label="面上的点"><svg viewBox="0 0 20 20"><path d="M2 8q5-7 15-5-5 5-2 11l-5-2-1 6Q2 15 2 8Z" fill="url(#blue)" stroke="#3c5cb8"/><circle cx="10" cy="6" r="2" class="rd"/></svg></button>
<span class="sep"></span>
<button class="s" aria-label="小平面"><svg viewBox="0 0 20 20"><path d="m2 6 8-4 8 3-8 4Z" fill="#eef4ff"/><path d="m2 6 8 3v9l-8-3Z" fill="#78baff"/><path d="m10 9 8-4v9l-8 4Z" fill="#3372e8"/><path d="m2 6 8-4 8 3v9l-8 4-8-3ZM8 3v9l9 3" fill="none" stroke="#a890c8"/></svg></button>
</div>

<div class="status"><p>选择对象并使用 <span>MB3</span>，或者双击某一对象</p><p></p></div>

<main class="work">
<nav class="tabs" aria-label="资源条">
<button aria-label="装配导航器"><svg viewBox="0 0 24 24"><path d="m2 3 4-2 3 2v4l4 1v4l-4 2-7-2Z" fill="#ffc936" stroke="#c88a10"/><path d="M2 7h7M6 4v9" stroke="#c88a10"/><path d="M13 12h10" stroke="#222"/><path d="M5 13v11M5 18h6" class="navy"/><path d="m13 18 4-3 5 1v4l-4 3-5-1Z" fill="#ffc936" stroke="#c88a10"/></svg></button>
<button aria-label="约束导航器"><svg viewBox="0 0 24 24"><path d="m3 1 7 5-7 5ZM19 1l-7 5 7 5Z" fill="#1520b8"/><path d="M11 0v24" stroke="#333" stroke-dasharray="3 2"/><path d="M1 14h8v9H1Z" fill="#ffef30" stroke="#333"/><path d="m13 14 9 9h-9Z" fill="#d01818" stroke="#700"/></svg></button>
<button class="active" aria-label="部件导航器"><svg viewBox="0 0 24 24"><path d="M1 3q5-3 9 0v7q-5 3-9 0Z" fill="#d887bd" stroke="#802060"/><path d="M14 10h9" stroke="#222"/><path d="M6 13v11M6 19h6" class="navy"/><circle cx="17" cy="19" r="4" fill="#fff" stroke="#902468"/><circle cx="17" cy="19" r="1.500" fill="none" stroke="#902468"/></svg></button>
<button class="end" aria-label="重用库"><svg viewBox="0 0 24 24"><path d="m1 5 5-4h4L7 5v18H1Z" fill="#e88430" stroke="#914208"/><path d="m7 5 5-4h4l-3 4v18H7Z" fill="#37b837" stroke="#107010"/><path d="m14 5 5-4h4v18l-4 4h-5Z" fill="#3c8ce8" stroke="#184c98"/><path d="M1 9h5M7 9h5M14 9h5M1 19h5M7 19h5M14 19h5" stroke="#fff"/></svg></button>
<button class="end" aria-label="信息"><svg viewBox="0 0 24 24"><circle cx="8" cy="15" r="8" fill="url(#globe)"/><path d="M8 9v2M6 13h3v6M6 19h5" stroke="#fff" stroke-width="2" fill="none"/><path d="M9 4q10 0 10 12M9 1q14 0 14 15" fill="none" stroke="#446cb8" stroke-width="2"/></svg></button>
<button class="end" aria-label="浏览器"><svg viewBox="0 0 24 24"><path d="M4 2h11l6 6v15H4Z" fill="#fff" stroke="#3868b8"/><path d="M15 2v6h6" fill="none" stroke="#3868b8"/><circle cx="12" cy="15" r="6" fill="url(#globe)"/><path d="M8 12q5-3 5 2t-2 5q-5-3-3-7Z" fill="#54b85a"/></svg></button>
<button aria-label="历史记录"><svg><use href="#clock"/></svg></button>
<button aria-label="系统材料"><svg viewBox="0 0 24 24"><path d="M3 3h17v19H3Z" fill="#eee" stroke="#888"/><path d="M6 7h11M6 11h11" stroke="#999"/></svg></button>
<button aria-label="角色"><svg viewBox="0 0 24 24"><path d="M4 1h9v5H4Z" fill="#f47a20"/><path d="M1 8q8 3 22-1" fill="none" stroke="#888" stroke-width="2"/></svg></button>
</nav>

<section class="panel">
<h2><svg class="pin" viewBox="0 0 12 12"><path d="m1 11 3-4M3 5l3-3 4 1 1 3-4 4-4-1Z" fill="#e6d855" stroke="#222"/><path d="m6 2 4 4" stroke="#222"/></svg>部件导航器</h2>
<div class="tree">
<table>
<colgroup><col class="c1"><col><col class="c3"></colgroup>
<thead><tr><th>名称 <i class="up"></i></th><th>附注</th><th></th></tr></thead>
<tbody>
<tr><td><div class="node"><i class="stem"></i><svg class="i16"><use href="#clock"/></svg>历史记录模式</div></td><td></td><td></td></tr>
<tr><td><div class="node"><button class="ex" aria-label="展开">+</button><svg class="i16" viewBox="0 0 16 16"><path d="m1 4 6-3 6 3v7l-6 3-6-3ZM7 1v13M1 4l6 3 6-3M1 11l6-4 6 4" fill="none" stroke="#108a50" stroke-width="1.300"/><path d="m9 11 5 3" stroke="#e03010" stroke-width="2"/></svg>模型视图</div></td><td></td><td></td></tr>
<tr><td><div class="node"><button class="ex" aria-label="展开">+</button><svg class="i16 snug" viewBox="0 0 16 16"><path d="m3 8 3 4 7-9" fill="none" stroke="#18b428" stroke-width="3"/></svg><svg class="i16" viewBox="0 0 16 16"><path d="m1 4 11-3v11L1 15Z" fill="#fff" stroke="#d05030"/><path d="m12 5 4 6-2 4-5-2Z" fill="#b030a0"/><circle cx="8" cy="7" r="4" fill="#a8c4e8" stroke="#456"/><path d="m5 5 6 4M8 3v8" stroke="#357"/></svg>摄像机</div></td><td></td><td></td></tr>
<tr><td><div class="node"><button class="ex" aria-label="折叠">−</button><svg class="i16" viewBox="0 0 16 16"><path d="M1 3h5l2 2h6v9H1Z" fill="#ffe48a" stroke="#b07a08"/><path d="M4 8h12l-3 6H1Z" fill="#ffc030" stroke="#a06a00"/></svg>模型历史记录</div></td><td></td><td></td></tr>
<tr><td><div class="node child dim"><i class="stem"></i><input type="checkbox" checked id="n1"><label for="n1"><svg class="i16"><use href="#csys"/></svg>基准坐标系 <span>(0)</span></label></div></td><td></td><td></td></tr>
<tr><td><div class="node child"><i class="stem"></i><input type="checkbox" checked id="n2"><label for="n2"><svg class="i16"><use href="#cube"/></svg>块 <span>(1)</span></label></div></td><td></td><td></td></tr>
<tr><td></td><td></td><td></td></tr><tr><td></td><td></td><td></td></tr><tr><td></td><td></td><td></td></tr><tr><td></td><td></td><td></td></tr><tr><td></td><td></td><td></td></tr><tr><td></td><td></td><td></td></tr><tr><td></td><td></td><td></td></tr><tr><td></td><td></td><td></td></tr><tr><td></td><td></td><td></td></tr><tr><td></td><td></td><td></td></tr><tr><td></td><td></td><td></td></tr>
</tbody>
</table>
</div>
<div class="split"><i></i></div>
<button class="fold"><span>相依性</span><svg viewBox="0 0 22 12"><path d="m6 5 5 5 6-5" fill="none" stroke="#555" stroke-width="2"/></svg></button>
</section>

<section class="view" aria-label="图形窗口">
<svg class="model" viewBox="0 0 287 281"><path d="M.5.5H285.500V279.500H.5Z" fill="none" stroke="#ff3030"/><g stroke="#222" stroke-linejoin="round"><path d="m107.500 115.500 112-28-2 47-112 28Z" fill="#ffb700"/><path d="m219.500 87.500 31.500 102-2 47.500-31.500-102.500Z" fill="#ee8f00"/><path d="m105.500 162.500 112-28 31.500 102.500-112 28Z" fill="#bc7000"/></g></svg>
<div class="triad"><span>Z</span><svg viewBox="0 0 32 8"><path d="M5 8 4 1l6 7Z" fill="#1030d0"/><path d="m22 8 5-2 4 2Z" fill="#aaa"/></svg></div>
</section>
</main>
</div>

<div class="callout" aria-hidden="true"></div>
<div class="stamp">
<svg viewBox="0 0 118 120"><path d="M73 4C43-6 5 18 1 59c-3 38 25 63 65 59 22-3 41-17 46-38l2-20-3 7-2-4c-2 25-21 44-45 48C37 115 14 91 13 61 12 34 31 12 57 10l21 3 13 7 8 10 9 7-1 6 3-4-3-9-9-12-7-4-5-5-9-3Z" fill="#fa0000"/><path d="m40 13 8-3 6 4 7-6 8 5M92 19l5 6 5 1 3 9 5 6v5M60 112l8-4 5 4 9-7 4 2 10-9 3 1M108 66l-3 7 5 1" fill="none" stroke="#fa0000" stroke-width="2"/><path d="m30 18 7-4M22 27l5-6M16 40l4-8M17 82l5 9M28 99l9 7" stroke="#ebebeb"/><circle cx="57" cy="22" r="5" fill="#fa0000"/><path d="M39 28q13 5 22 3l19-6q4 1 3 4l-19 8q8 8 10 24h-8q-3-10-10-16-2 6-6 11l-7-4q7-8 7-15-7-3-11-9Z" fill="#fa0000"/></svg>
<strong><span>UG</span>爱好者</strong>
<em>WWW.UGSNX.COM</em>
</div>
</div>
</body>
</html>
```
FILE: styles.css
```css
* { box-sizing: border-box; }

body {
  margin: 0;
  height: 100vh;
  overflow: hidden;
  font: 12px/16px "Open Sans", "Noto Sans CJK SC", sans-serif;
  color: #111;
}

button {
  margin: 0;
  padding: 0;
  border: 0;
  background: none;
  font: inherit;
  color: inherit;
}

svg { display: block; }
.defs { position: absolute; width: 0; height: 0; }
.i16 { width: 16px; height: 16px; flex: none; }

.k { fill: none; stroke: #222; stroke-width: 1.3; }
.rl { fill: none; stroke: #dc2020; stroke-width: 1.4; }
.bl { fill: none; stroke: #2c50b8; stroke-width: 1.4; }
.rd { fill: #dc1010; }
.g2 { fill: none; stroke: #999; stroke-width: 2; }
.net { fill: none; stroke: #5563d8; stroke-width: 1; }
.navy { fill: none; stroke: #152888; stroke-width: 1.5; }
.lens { fill: #8fa8e0; stroke: #222; }
.coil { fill: none; stroke: #3c68aa; stroke-width: 1.2; }
.tiny { font: bold 7px "Liberation Sans", sans-serif; fill: #222; }

.desktop { display: flex; height: 100%; position: relative; }

.behind {
  flex: none;
  width: 5px;
  background: linear-gradient(#5580d8 0 6px, #eef0f4 6px 30px, #d8d4c6 30px 83px, #648ade 83px 96px, #fff 96px 115px, #98aad8 115px 120px, #e0e6f2 120px 125px, #6b8cd8 125px 136px, #fff 136px 160px, #d8e2f6 160px 174px, #d9a23e 174px 181px, #d8e2f6 181px 192px, #5a90d8 192px 200px, #d8e2f6 200px 218px, #d9a23e 218px 226px, #4c90d8 226px 240px, #c8d6ee 240px 250px, #4c90d8 250px 266px, #dce4f8 266px 278px, #6b8cd8 278px 293px, #fff 293px 318px, #ccd8f4 318px 328px, #b4bccc 328px 428px, #ccd8ff 428px 513px, #5878d0 513px);
}

.window {
  flex: 1;
  min-width: 0;
  display: flex;
  flex-direction: column;
  overflow: hidden;
  border-left: 3px solid #141414;
  border-top: 2px solid #7ba0e4;
}

.titlebar {
  flex: none;
  display: flex;
  align-items: center;
  gap: 5px;
  height: 29px;
  padding: 2px 3px 0;
  background: linear-gradient(#222 0 1px, #626466 1px, #545658 9px, #1b1b1b 9px 28px, #000 28px);
}

.titlebar h1 {
  margin: 0;
  font: bold 14px/18px "Noto Sans CJK SC", sans-serif;
  color: #fff;
}

.titlebar h1 span {
  font: bold 13px/18px "Liberation Mono", monospace;
  white-space: pre;
}

.menubar {
  flex: none;
  display: flex;
  align-items: center;
  height: 27px;
  padding-left: 4px;
  background: linear-gradient(#e8e8e8, #dedede);
  border-bottom: 1px solid #bbb;
}

.menubar a {
  margin-right: 12px;
  color: #111;
  text-decoration: none;
  white-space: nowrap;
}

.menubar .i16 { margin-right: 6px; }

.toolbar {
  flex: none;
  display: flex;
  height: 34px;
  overflow: hidden;
  background: linear-gradient(#e0e0e0, #d2d2d2);
  border-top: 1px solid #f0f0f0;
  border-bottom: 1px solid #b4b4b4;
}

.toolbar.last { border-bottom-color: #929292; }

.group { flex: none; display: flex; align-items: center; }
.group + .group { border-left: 1px solid #f8f8f8; box-shadow: -1px 0 #b4b4b4; }

.group::before, .menubar::before {
  content: "";
  width: 3px;
  height: 22px;
  margin: 0 1px 0 4px;
  background: repeating-linear-gradient(#aaa 0 2px, #eee 2px 4px);
}

.menubar::before { height: 18px; margin: 0 1px 0 0; }
.group + .group::before { margin-left: 3px; }

.b {
  flex: none;
  display: flex;
  justify-content: center;
  align-items: center;
  width: 31px;
  height: 30px;
}

.b svg { width: 24px; height: 24px; flex: none; }

.label { width: auto; padding: 0 2px; white-space: nowrap; gap: 4px; justify-content: flex-start; }
.label.tight { padding: 0 4px; }

.letter { font: bold 24px/24px "Liberation Serif", serif; }

.tri, .drop::before {
  content: "";
  border: 3px solid transparent;
  border-top-color: #111;
  border-bottom: 0;
}

.drop { flex: none; width: 12px; height: 30px; display: grid; place-items: center; }
.slim { width: 8px; }

.sep {
  flex: none;
  width: 2px;
  height: 30px;
  margin: 0 2px;
  border-left: 1px solid #b4b4b4;
  border-right: 1px solid #f8f8f8;
}

.more {
  flex: none;
  display: flex;
  flex-direction: column;
  justify-content: space-between;
  align-items: center;
  align-self: stretch;
  padding-bottom: 6px;
}

.more b { font: bold 16px/16px "Liberation Sans", sans-serif; }
.m14 { width: 15px; padding-right: 3px; }
.m20 { width: 20px; padding-left: 2px; }
.m36 { width: 35px; padding-left: 17px; }
.m40 { width: 39px; padding-left: 22px; }
.m44 { width: 45px; padding-left: 26px; }

.selbar {
  flex: none;
  display: flex;
  align-items: center;
  height: 31px;
  padding-left: 5px;
  background: linear-gradient(#c6c6c6, #dadada 14px);
  border-bottom: 1px solid #aaa;
}

.selbar .sep { height: 26px; }

.pick { position: relative; width: 143px; margin-right: 8px; }
.pick.wide { width: 151px; margin-right: 4px; }

.pick select {
  appearance: none;
  display: block;
  width: 100%;
  height: 20px;
  padding: 0 20px 0 2px;
  border: 1px solid #666;
  border-radius: 3px;
  background: #fff;
  font: inherit;
  color: #111;
}

.pick::before {
  content: "";
  position: absolute;
  right: 1px;
  top: 1px;
  width: 17px;
  height: 18px;
  border-radius: 2px;
  background: linear-gradient(#c4dcf4, #5a9cec);
  border-left: 1px solid #2b5ca8;
  pointer-events: none;
}

.pick::after {
  content: "";
  position: absolute;
  right: 4px;
  top: 7px;
  border: 5px solid transparent;
  border-top: 6px solid #111;
  border-bottom: 0;
  pointer-events: none;
}

.s {
  flex: none;
  width: 23px;
  height: 22px;
  display: grid;
  place-items: center;
  border-radius: 2px;
}

.s svg { width: 18px; height: 18px; }
.s.on { background: #fff; border: 1px solid #555; }

.status {
  flex: none;
  display: flex;
  height: 22px;
  background: linear-gradient(#e0e0e0, #d6d6d6);
  border-top: 1px solid #f4f4f4;
  border-bottom: 1px solid #909090;
}

.status p {
  flex: 1 1 504px;
  margin: 0;
  padding-left: 2px;
  font: bold 13px/17px "Open Sans", "Noto Sans CJK SC", sans-serif;
}

.status p:first-child { flex: 0 1 668px; border-right: 1px solid #fff; }
.status span { font-weight: 600; color: #234; }

.work { flex: 1; min-height: 0; display: flex; }

.tabs {
  flex: none;
  width: 33px;
  display: flex;
  flex-direction: column;
  align-items: flex-end;
  gap: 2px;
  padding-top: 17px;
  overflow: hidden;
  background: linear-gradient(90deg, #a0a0a0, #b4b4b4);
}

.tabs button {
  flex: none;
  width: 27px;
  height: 40px;
  display: grid;
  place-items: center;
  border: 1px solid #666;
  border-radius: 4px 0 0 4px;
  background: linear-gradient(#dedede, #cccccc);
}

.tabs .active { width: 29px; height: 42px; margin: -1px 0; background: #eee; border-right-color: #eee; }
.tabs .end { margin-bottom: 12px; }
.tabs svg { width: 24px; height: 24px; }

.panel {
  flex: none;
  width: 325px;
  display: flex;
  flex-direction: column;
  padding: 0 9px;
  background: #ebebeb;
  border-right: 2px solid #777;
}

.panel h2 {
  flex: none;
  display: flex;
  align-items: center;
  gap: 12px;
  height: 35px;
  margin: 0;
  padding: 2px 0 0 6px;
  font: bold 13px/18px "Noto Sans CJK SC", sans-serif;
}

.pin { width: 12px; height: 12px; }

.tree {
  flex: 1;
  min-height: 0;
  overflow: hidden;
  background: #fff;
  border: 1px solid #666;
}

table { width: 100%; border-collapse: separate; border-spacing: 0; table-layout: fixed; }
.c1 { width: 201px; }
.c3 { width: 2px; }

th {
  height: 20px;
  padding: 0 5px;
  text-align: left;
  font-weight: normal;
  line-height: 18px;
  background: linear-gradient(#fff, #e2e4e5 50%, #d4d6d7);
  border-bottom: 1px solid #888;
  border-right: 1px solid #aaa;
}

th:last-child, td:last-child { padding: 0; border-right: 0; }

.up {
  display: inline-block;
  margin: 0 0 2px 12px;
  border: 5px solid transparent;
  border-top: 0;
  border-bottom: 6px solid #222;
}

td {
  height: 20px;
  padding: 0;
  line-height: 18px;
  border-right: 1px solid #e2e2e2;
  border-bottom: 1px solid #e2e2e2;
}

tbody tr:nth-child(even) { background: #f6f6f6; }

.node { display: flex; align-items: center; height: 19px; padding-left: 5px; color: #333; }
.node .i16 { margin: 0 2px 0 1px; }
.node .snug { margin: 0; }
.node .stem { width: 10px; margin: 0 0 0 5px; border-top: 1px dotted #999; }
.node label { display: flex; align-items: center; white-space: pre; }
.node.child { padding-left: 25px; }
.node.dim { color: #999; }
.node label span { color: #567; }
.node.dim label span { color: #999; }

.ex {
  width: 9px;
  height: 9px;
  margin-right: 6px;
  border: 1px solid #888;
  border-radius: 1px;
  font: bold 9px/6px "Liberation Sans", sans-serif;
  background: #fff;
}

.node input {
  appearance: none;
  position: relative;
  width: 12px;
  height: 12px;
  margin: 0 2px 0 1px;
  border: 1px solid #111;
  background: #fff;
}

.node input:checked::after {
  content: "";
  position: absolute;
  left: 3px;
  top: 0;
  width: 4px;
  height: 8px;
  border: solid #18b428;
  border-width: 0 2px 2px 0;
  transform: rotate(40deg);
}

.split {
  flex: none;
  display: grid;
  place-items: center;
  height: 13px;
  background: linear-gradient(#bbb, #fff) 0 6px / 100% 2px no-repeat;
}

.split i {
  width: 53px;
  height: 7px;
  background: #d4d4d4;
  border: 1px solid #999;
  border-width: 0 1px 1px 0;
  box-shadow: 0 0 0 3px #ebebeb;
}

.fold {
  flex: none;
  display: flex;
  justify-content: space-between;
  height: 9px;
  overflow: hidden;
  padding-left: 7px;
  background: #f6f6f6;
  border-top: 1px solid #fff;
  font: bold 13px/18px "Noto Sans CJK SC", sans-serif;
}

.fold svg { width: 22px; height: 12px; border-left: 1px solid #888; }

.view {
  flex: 1;
  min-width: 0;
  position: relative;
  overflow: hidden;
  background: linear-gradient(#b3b4b6, #e6e7e9 88%, #e8e9ea);
}

.model { position: absolute; left: 483px; top: 114px; width: 287px; height: 281px; }

.triad { position: absolute; left: 30px; bottom: 0; color: #2450e0; line-height: 9px; }
.triad svg { width: 32px; height: 8px; margin-left: 2px; }

.callout {
  position: absolute;
  left: 7px;
  top: 4px;
  width: 348px;
  height: 39px;
  border: solid #f03030;
  border-width: 0 1px 1px;
  pointer-events: none;
}

.stamp { position: absolute; left: 12px; bottom: 9px; width: 118px; color: #fa0000; }
.stamp svg { width: 118px; height: 120px; }

.stamp strong {
  position: absolute;
  left: 25px;
  top: 62px;
  font: 900 15px/20px "Noto Sans CJK SC", sans-serif;
  white-space: nowrap;
}

.stamp strong span { font: bold 20px/20px "Liberation Sans", sans-serif; }

.stamp em {
  position: absolute;
  left: 14px;
  top: 83px;
  padding: 0 3px;
  border-radius: 3px;
  background: #fa0000;
  color: #fff;
  font: bold 10px/12px "Liberation Sans", sans-serif;
}
```
